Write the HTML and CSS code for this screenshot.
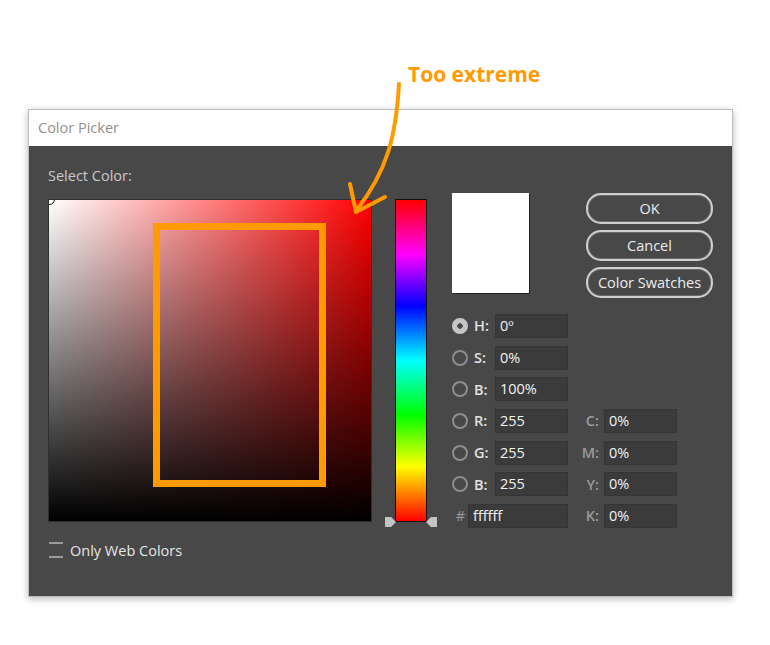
FILE: index.html
```html
<!DOCTYPE html>
<html lang="en">
<head>
<meta charset="utf-8">
<title>Color Picker</title>
<link rel="stylesheet" href="styles.css">
</head>
<body>
<div class="page">
  <div class="annot-head"><span class="annot-text">Too extreme</span></div>
  <div class="dialog">
    <div class="titlebar">Color Picker</div>
    <div class="dbody">
      <div class="leftcol">
        <div class="select-label">Select Color:</div>
        <div class="field">
          <div class="marker"></div>
          <div class="highlight"></div>
        </div>
        <div class="webcolors">
          <span class="checkbox"></span>
          <span class="webcolors-text">Only Web Colors</span>
        </div>
      </div>
      <div class="hue">
        <div class="hue-bar"></div>
        <span class="tri tri-left"></span>
        <span class="tri tri-right"></span>
      </div>
      <div class="rightcol">
        <div class="toprow">
          <div class="preview"></div>
          <div class="buttons">
            <div class="btn">OK</div>
            <div class="btn">Cancel</div>
            <div class="btn">Color Swatches</div>
          </div>
        </div>
        <div class="fields">
          <span class="radio checked"></span><span class="lbl">H:</span><span class="inp">0º</span><span></span><span></span>
          <span class="radio"></span><span class="lbl">S:</span><span class="inp">0%</span><span></span><span></span>
          <span class="radio"></span><span class="lbl">B:</span><span class="inp">100%</span><span></span><span></span>
          <span class="radio"></span><span class="lbl">R:</span><span class="inp">255</span><span class="clbl">C:</span><span class="inp">0%</span>
          <span class="radio"></span><span class="lbl">G:</span><span class="inp">255</span><span class="clbl">M:</span><span class="inp">0%</span>
          <span class="radio"></span><span class="lbl">B:</span><span class="inp">255</span><span class="clbl">Y:</span><span class="inp">0%</span>
          <span class="hash">#</span><span class="inp hex">ffffff</span><span class="clbl">K:</span><span class="inp">0%</span>
        </div>
      </div>
    </div>
  </div>
  <svg class="arrow" width="770" height="645" viewBox="0 0 770 645">
    <path d="M399 84 C 396 135, 388 170, 356 211" fill="none" stroke="#ff9a00" stroke-width="4" stroke-linecap="round"/>
    <path d="M350 184 L356 212 L385 197" fill="none" stroke="#ff9a00" stroke-width="4" stroke-linecap="round" stroke-linejoin="round"/>
  </svg>
</div>
</body>
</html>
```
FILE: styles.css
```css
* { box-sizing: border-box; }
html, body { margin: 0; padding: 0; background: #fff; }
body { font-family: "Open Sans", "Noto Sans", sans-serif; }
.page { position: relative; width: 770px; height: 645px; }

.annot-head { height: 109px; padding: 59px 0 0 408px; }
.annot-text { display: block; font-size: 21px; line-height: 30px; font-weight: 700; color: #ff9a00; }

.dialog {
  margin-left: 28px; width: 705px; height: 488px;
  border: 1px solid #bdbdbd;
  box-shadow: 0 2px 7px rgba(0,0,0,0.28);
  display: flex; flex-direction: column;
}
.titlebar {
  height: 36px; line-height: 36px; background: #fff;
  padding-left: 9px; font-size: 14.5px; color: #8f8f8f;
}
.dbody { flex: 1; background: #484848; display: flex; padding: 20px 0 0 19px; }

.leftcol { width: 324px; }
.select-label { font-size: 14.5px; line-height: 19px; color: #c9c9c9; }
.field {
  position: relative; overflow: hidden;
  margin-top: 14px; width: 324px; height: 323px;
  border: 1px solid #2f2f2f;
  background: linear-gradient(to bottom, rgba(0,0,0,0), #000), linear-gradient(to right, #fff, #f00);
}
.marker {
  position: absolute; left: -5px; top: -6px; width: 11px; height: 11px;
  border: 1.5px solid #111; border-radius: 50%;
}
.highlight {
  position: absolute; left: 104px; top: 23px; width: 173px; height: 264px;
  border: 7px solid #ff9a00;
}
.webcolors { display: flex; align-items: center; margin-top: 19px; height: 18px; }
.checkbox { width: 14px; height: 16px; margin-left: 1px; border-top: 2px solid #9a9a9a; border-bottom: 2px solid #9a9a9a; }
.webcolors-text { margin-left: 7px; font-size: 14.5px; color: #e6e6e6; }

.hue { position: relative; margin: 33px 0 0 23px; width: 32px; height: 323px; }
.hue-bar {
  width: 32px; height: 323px;
  border: 1px solid #111;
  background: linear-gradient(to bottom, #f00 0%, #f0f 17%, #00f 33%, #0ff 50%, #0f0 67%, #ff0 83%, #f00 100%);
}
.tri { position: absolute; bottom: -5px; width: 11px; height: 10px; background: #c4c4c4; }
.tri-left { left: -10px; clip-path: polygon(0 0, 55% 0, 100% 50%, 55% 100%, 0 100%); }
.tri-right { right: -10px; clip-path: polygon(100% 0, 45% 0, 0 50%, 45% 100%, 100% 100%); }

.rightcol { margin: 27px 0 0 25px; }
.toprow { display: flex; align-items: flex-start; }
.preview { width: 77px; height: 100px; background: #fff; box-shadow: 1px 1px 0 #222; }
.buttons { margin-left: 57px; display: flex; flex-direction: column; gap: 6px; }
.btn {
  width: 127px; height: 31px; border-radius: 15px;
  border: 2px solid #cfcfcf; box-shadow: inset 0 0 0 1px #6b6b6b;
  color: #ececec; font-size: 14.5px; line-height: 27px; text-align: center;
}

.fields {
  margin-top: 12px;
  display: grid;
  grid-template-columns: 16px 27px 73px 36px 73px;
  grid-auto-rows: 31.7px;
  align-items: center;
}
.radio { width: 16px; height: 16px; border-radius: 50%; border: 2px solid #8d8d8d; }
.radio.checked { background: radial-gradient(circle, #4a4a4a 0 2.5px, #c6c6c6 3px); border-color: #c6c6c6; }
.lbl { padding-left: 6px; font-size: 14.5px; font-weight: 600; color: #e2e2e2; }
.clbl { text-align: right; padding-right: 5px; font-size: 14.5px; font-weight: 600; color: #9a9a9a; }
.inp {
  height: 24px; line-height: 22px; padding-left: 4px;
  background: #3b3b3b; border: 1px solid #353535;
  font-size: 14.5px; color: #f2f2f2;
}
.hash { text-align: center; font-size: 14.5px; color: #9a9a9a; padding-left: 1px; }
.inp.hex { grid-column: span 2; }

.arrow { position: absolute; left: 0; top: 0; pointer-events: none; }
```
